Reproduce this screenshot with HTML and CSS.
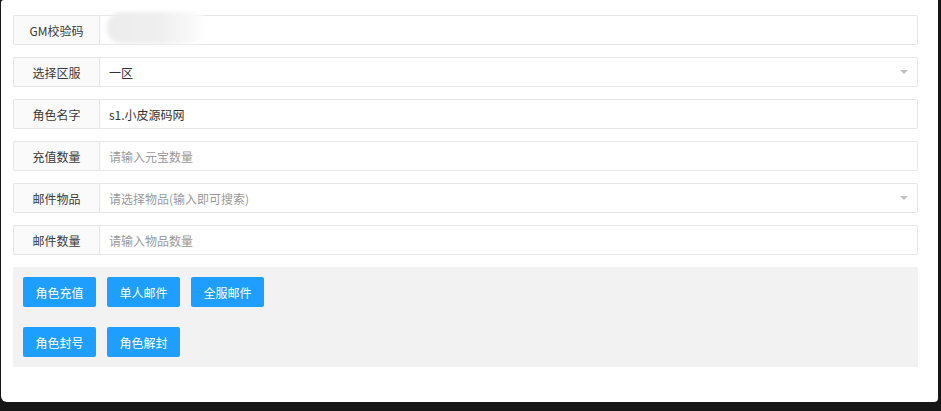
FILE: index.html
```html
<!DOCTYPE html>
<html lang="zh-CN">
<head>
<meta charset="utf-8">
<title>GM</title>
<link rel="stylesheet" href="styles.css">
</head>
<body>
<div class="panel">
  <div class="row">
    <label class="label">GM校验码</label>
    <div class="field"><span class="blurred"></span></div>
  </div>
  <div class="row">
    <label class="label">选择区服</label>
    <div class="field select"><span class="value">一区</span><i class="edge"></i></div>
  </div>
  <div class="row">
    <label class="label">角色名字</label>
    <div class="field"><span class="value">s1.小皮源码网</span></div>
  </div>
  <div class="row">
    <label class="label">充值数量</label>
    <div class="field"><span class="ph">请输入元宝数量</span></div>
  </div>
  <div class="row">
    <label class="label">邮件物品</label>
    <div class="field select"><span class="ph">请选择物品(输入即可搜索)</span><i class="edge"></i></div>
  </div>
  <div class="row">
    <label class="label">邮件数量</label>
    <div class="field"><span class="ph">请输入物品数量</span></div>
  </div>
  <div class="actions">
    <div class="btn-row">
      <button class="btn">角色充值</button>
      <button class="btn">单人邮件</button>
      <button class="btn">全服邮件</button>
    </div>
    <div class="btn-row">
      <button class="btn">角色封号</button>
      <button class="btn">角色解封</button>
    </div>
  </div>
</div>
</body>
</html>
```
FILE: styles.css
```css
html, body {
  margin: 0;
  padding: 0;
  background: #161616;
}
body {
  padding: 0 0 0 1px;
  font-family: "Noto Sans CJK SC", "Liberation Sans", sans-serif;
  font-size: 12px;
  color: #333;
}
.panel {
  width: 937px;
  height: 402px;
  box-sizing: border-box;
  background: #fff;
  border-radius: 3px 0 4px 6px;
  padding: 15px 20px 0 12px;
}
.row {
  display: flex;
  height: 30px;
  margin-bottom: 12px;
}
.label {
  width: 86px;
  box-sizing: border-box;
  border: 1px solid #e6e6e6;
  border-right: none;
  border-radius: 2px 0 0 2px;
  background: #fafafa;
  display: flex;
  align-items: center;
  justify-content: center;
  color: #3a3a3a;
}
.field {
  flex: 1;
  position: relative;
  box-sizing: border-box;
  border: 1px solid #e6e6e6;
  border-radius: 0 2px 2px 0;
  display: flex;
  align-items: center;
  padding-left: 9px;
}
.value { color: #333; }
.ph { color: #9a9a9a; }
.blurred {
  position: absolute;
  left: 7px;
  top: -4px;
  width: 100px;
  height: 32px;
  border-radius: 15px;
  background: linear-gradient(90deg, #ececec 0%, #efefef 55%, #f7f7f7 80%, #fff 100%);
  filter: blur(2px);
}
.edge {
  position: absolute;
  right: 9px;
  top: 12px;
  width: 0;
  height: 0;
  border-left: 4px solid transparent;
  border-right: 4px solid transparent;
  border-top: 4px solid #c2c2c2;
}
.actions {
  margin-top: 1px;
  background: #f2f2f2;
  padding: 10px;
  display: flex;
  flex-direction: column;
  gap: 20px;
}
.btn-row {
  display: flex;
  gap: 11px;
}
.btn {
  height: 30px;
  width: 73px;
  padding: 0;
  border: none;
  border-radius: 2px;
  background: #1e9fff;
  color: #fff;
  font-family: "Noto Sans CJK SC", "Liberation Sans", sans-serif;
  font-size: 12px;
}
```
